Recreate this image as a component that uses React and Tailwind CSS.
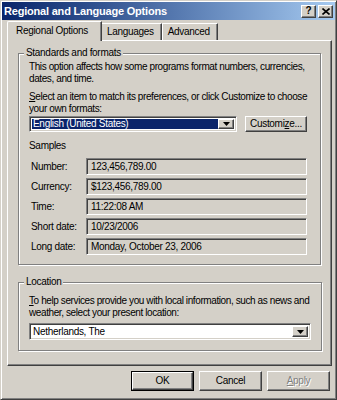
import React from 'react';

const raised = 'border border-t-white border-l-white border-r-[#404040] border-b-[#404040] shadow-[inset_-1px_-1px_0_#808080]';
const sunken = 'border border-t-[#808080] border-l-[#808080] border-r-white border-b-white shadow-[inset_1px_1px_0_#404040,inset_-1px_-1px_0_#d4d0c8]';

const samples = [
    ['Number:', '123,456,789.00'],
    ['Currency:', '$123,456,789.00'],
    ['Time:', '11:22:08 AM'],
    ['Short date:', '10/23/2006'],
    ['Long date:', 'Monday, October 23, 2006'],
];

const Arrow = () => (
    <div className={`${raised} w-[16px] h-full flex items-center justify-center bg-[#d4d0c8]`}>
        <svg width="7" height="4" viewBox="0 0 7 4">
            <path d="M0 0H7L3.5 4Z" fill="#000" />
        </svg>
    </div>
);

const Group = ({ title, className, children }) => (
    <fieldset className={`border border-[#808080] shadow-[1px_1px_0_#fff,inset_1px_1px_0_#fff] px-[10px] ${className}`}>
        <legend className="ml-[-5px] px-[2px] bg-[#d4d0c8] leading-[12px]">{title}</legend>
        {children}
    </fieldset>
);

const App = () => {
    return (
        <div className="w-[337px] h-[400px] bg-[#d4d0c8] text-black text-[10px] leading-[12px] tracking-[-0.3px] border border-t-[#d4d0c8] border-l-[#d4d0c8] border-r-[#404040] border-b-[#404040] shadow-[inset_1px_1px_0_#fff,inset_-1px_-1px_0_#808080] px-[1px] pt-[1px] flex flex-col"
             style={{ fontFamily: '"Liberation Sans", Arial, sans-serif' }}>

            {/* title bar */}
            <div className="h-[18px] bg-linear-to-r from-[#0a246a] to-[#a6caf0] flex items-center pl-[2px] pr-[2px]">
                <span className="text-white font-bold text-[11px] tracking-[-0.2px] flex-1">Regional and Language Options</span>
                <div className={`${raised} w-[15px] h-[13px] bg-[#d4d0c8] flex items-center justify-center font-bold text-[10px] tracking-normal`}>?</div>
                <div className={`${raised} w-[15px] h-[13px] ml-[2px] bg-[#d4d0c8] flex items-center justify-center`}>
                    <svg width="8" height="7" viewBox="0 0 8 7">
                        <path d="M0.5 0.5L7.5 6.5M7.5 0.5L0.5 6.5" stroke="#000" strokeWidth="1.6" />
                    </svg>
                </div>
            </div>

            {/* tabs */}
            <div className="flex items-end h-[19px] mt-[1px] ml-[5px]">
                <div className="relative z-10 h-[20px] mb-[-1px] pl-[8px] pr-[13px] pt-[3px] bg-[#d4d0c8] border-t border-l border-r border-t-white border-l-white border-r-[#404040] shadow-[inset_-1px_0_0_#808080] rounded-tl-[2px]">
                    Regional Options
                </div>
                <div className="h-[17px] pl-[5px] pr-[7px] pt-[2px] border-t border-r border-t-white border-r-[#404040] shadow-[inset_-1px_0_0_#808080]">
                    Languages
                </div>
                <div className="h-[17px] pl-[5px] pr-[7px] pt-[2px] border-t border-r border-l border-l-white border-t-white border-r-[#404040] shadow-[inset_-1px_0_0_#808080]">
                    Advanced
                </div>
            </div>

            {/* panel */}
            <div className={`${raised} ml-[5px] w-[325px] h-[326px] px-[10px] pt-[6px] flex flex-col`}>
                <Group title="Standards and formats" className="pb-[9px]">
                    <p className="mt-[2px] whitespace-nowrap tracking-[-0.4px]">
                        This option affects how some programs format numbers, currencies,<br />
                        dates, and time.
                    </p>
                    <p className="mt-[6px] whitespace-nowrap tracking-[-0.4px]">
                        <u>S</u>elect an item to match its preferences, or click Customize to choose<br />
                        your own formats:
                    </p>
                    <div className="flex items-center mt-[1px]">
                        <div className={`${sunken} w-[208px] h-[16px] bg-white flex items-stretch p-[2px]`}>
                            <div className="flex-1 bg-[#0a246a] text-white pl-[1px] leading-[10px]">English (United States)</div>
                            <Arrow />
                        </div>
                        <button className={`${raised} ml-[8px] w-[62px] h-[16px] bg-[#d4d0c8] leading-[12px]`}>Customi<u>z</u>e...</button>
                    </div>
                    <p className="mt-[8px]">Samples</p>
                    <div className="flex flex-col gap-[3px] mt-[6px]">
                        {samples.map(([label, value]) => (
                            <div key={label} className="flex items-center">
                                <span className="w-[57px] pl-[2px]">{label}</span>
                                <div className={`${sunken} w-[221px] h-[17px] pl-[4px] flex items-center bg-[#d4d0c8]`}>{value}</div>
                            </div>
                        ))}
                    </div>
                </Group>

                <Group title="Location" className="mt-[11px] pb-[10px]">
                    <p className="mt-[7px] whitespace-nowrap tracking-[-0.4px]">
                        <u>T</u>o help services provide you with local information, such as news and<br />
                        weather, select your present location:
                    </p>
                    <div className={`${sunken} mt-[4px] w-[282px] h-[17px] bg-white flex items-stretch p-[2px]`}>
                        <div className="flex-1 pl-[1px] leading-[11px]">Netherlands, The</div>
                        <Arrow />
                    </div>
                </Group>
            </div>

            {/* buttons */}
            <div className="flex justify-end gap-[5px] mt-[5px] pr-[5px]">
                <button className="w-[63px] h-[20px] border border-black bg-[#d4d0c8]">
                    <div className={`${raised} h-full flex items-center justify-center`}>OK</div>
                </button>
                <button className={`${raised} w-[63px] h-[20px] bg-[#d4d0c8]`}>Cancel</button>
                <button className={`${raised} w-[63px] h-[20px] bg-[#d4d0c8] text-[#808080] [text-shadow:1px_1px_0_#fff]`}><u>A</u>pply</button>
            </div>
        </div>
    );
};

export default App;
